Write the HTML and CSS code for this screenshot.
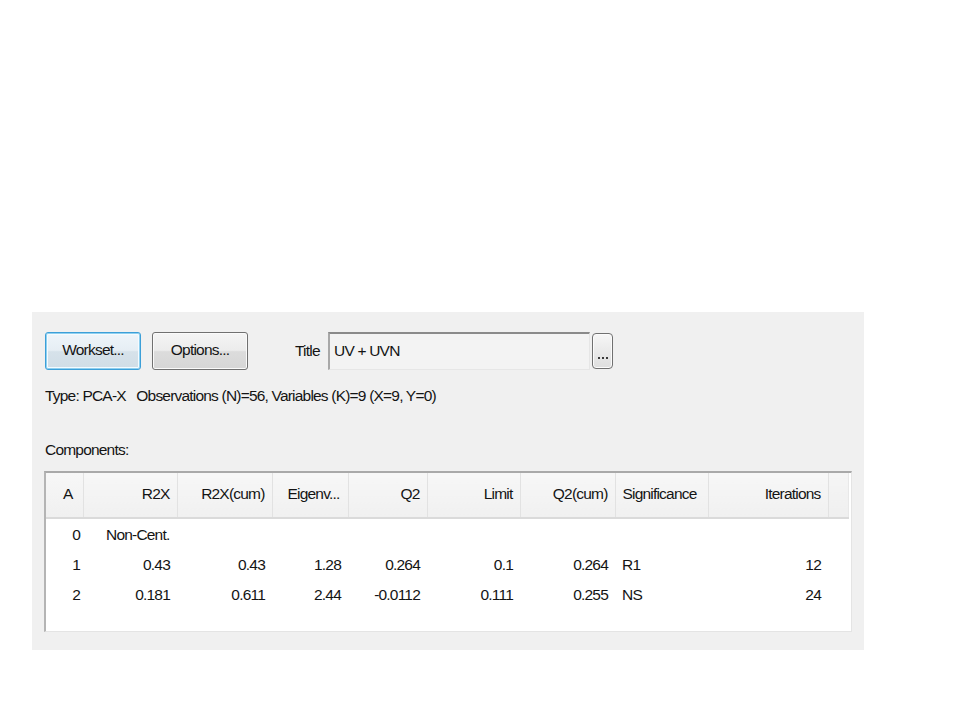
FILE: index.html
```html
<!DOCTYPE html>
<html>
<head>
<meta charset="utf-8">
<link rel="stylesheet" href="styles.css">
</head>
<body>
<div class="panel">
  <div class="toprow">
    <button class="btn btn-focus">Workset...</button>
    <button class="btn">Options...</button>
    <span class="title-label">Title</span>
    <div class="title-field">UV + UVN</div>
    <button class="dots-btn"><span class="dots"><i></i><i></i><i></i></span></button>
  </div>
  <div class="info">Type: PCA-X&nbsp;&nbsp; Observations (N)=56, Variables (K)=9 (X=9, Y=0)</div>
  <div class="label">Components:</div>
  <div class="grid">
    <table>
      <colgroup>
        <col class="c-a"><col class="c-r2x"><col class="c-r2xc"><col class="c-eig"><col class="c-q2"><col class="c-lim"><col class="c-q2c"><col class="c-sig"><col class="c-it"><col>
      </colgroup>
      <thead>
        <tr>
          <th class="r a-head">A</th>
          <th class="r">R2X</th>
          <th class="r">R2X(cum)</th>
          <th class="l eig">Eigenv...</th>
          <th class="r">Q2</th>
          <th class="r">Limit</th>
          <th class="r">Q2(cum)</th>
          <th class="l">Significance</th>
          <th class="r">Iterations</th>
          <th class="filler"></th>
        </tr>
      </thead>
      <tbody>
        <tr class="first">
          <td class="r a-cell">0</td>
          <td class="l noncent" colspan="2">Non-Cent.</td>
          <td></td><td></td><td></td><td></td><td></td><td></td><td></td>
        </tr>
        <tr>
          <td class="r a-cell">1</td>
          <td class="r">0.43</td>
          <td class="r">0.43</td>
          <td class="r">1.28</td>
          <td class="r">0.264</td>
          <td class="r">0.1</td>
          <td class="r">0.264</td>
          <td class="l">R1</td>
          <td class="r">12</td>
          <td></td>
        </tr>
        <tr>
          <td class="r a-cell">2</td>
          <td class="r">0.181</td>
          <td class="r">0.611</td>
          <td class="r">2.44</td>
          <td class="r">-0.0112</td>
          <td class="r">0.111</td>
          <td class="r">0.255</td>
          <td class="l">NS</td>
          <td class="r">24</td>
          <td></td>
        </tr>
      </tbody>
    </table>
  </div>
</div>
</body>
</html>
```
FILE: styles.css
```css
html, body {
  margin: 0;
  padding: 0;
  background: #ffffff;
}
body {
  font-family: "Liberation Sans", Arial, sans-serif;
  font-size: 15.5px;
  letter-spacing: -0.8px;
  color: #141414;
}
.panel {
  box-sizing: border-box;
  margin: 312px 0 0 32px;
  width: 832px;
  height: 338px;
  background: #f0f0f0;
  padding: 20px 0 0 13px;
}
.toprow {
  display: flex;
  align-items: center;
  height: 38px;
}
.btn {
  box-sizing: border-box;
  width: 96px;
  height: 38px;
  margin: 0 11px 0 0;
  padding: 0 0 2px 0;
  font: inherit;
  letter-spacing: -0.8px;
  color: #141414;
  border: 1px solid #707070;
  border-radius: 3px;
  background: linear-gradient(#f4f4f4 0%, #ececec 48%, #dcdcdc 52%, #d6d6d6 100%);
  box-shadow: inset 0 0 0 1px #fafafa;
}
.btn-focus {
  border: 1px solid #3c9fd8;
  box-shadow: inset 0 0 0 1px #8fd0f0, inset 0 0 0 2px #f4fbff;
  background: linear-gradient(#eef5fa 0%, #e6eef4 48%, #d6e2ea 52%, #d0dde6 100%);
}
.title-label {
  margin-left: 36px;
  width: 33px;
}
.title-field {
  box-sizing: border-box;
  width: 262px;
  height: 38px;
  padding: 0 0 2px 4px;
  display: flex;
  align-items: center;
  background: #f3f3f3;
  border-top: 2px solid #8a8a8a;
  border-left: 2px solid #a8a8a8;
  border-right: 1px solid #e6e6e6;
  border-bottom: 1px solid #e6e6e6;
}
.dots-btn {
  box-sizing: border-box;
  width: 21px;
  height: 36px;
  margin-left: 2px;
  padding: 0 0 9px 0;
  border: 1px solid #707070;
  border-radius: 4px;
  background: linear-gradient(#f6f6f6, #dedede);
  box-shadow: inset 0 0 0 1px #fbfbfb;
  display: flex;
  align-items: flex-end;
  justify-content: center;
}
.dots {
  display: flex;
  gap: 2px;
}
.dots i {
  display: block;
  width: 2px;
  height: 2px;
  background: #3a3a3a;
}
.info {
  margin-top: 16px;
  line-height: 20px;
  height: 20px;
}
.label {
  margin-top: 34px;
  line-height: 20px;
  height: 20px;
}
.grid {
  box-sizing: border-box;
  margin: 11px 0 0 -1px;
  width: 808px;
  height: 161px;
  background: #ffffff;
  border-top: 2px solid #a9a9a9;
  border-left: 2px solid #b4b4b4;
  border-right: 1px solid #e4e4e4;
  border-bottom: 1px solid #e4e4e4;
  padding-right: 3px;
}
table {
  border-collapse: collapse;
  table-layout: fixed;
  width: 803px;
}
col.c-a { width: 37px; }
col.c-r2x { width: 94px; }
col.c-r2xc { width: 95px; }
col.c-eig { width: 76px; }
col.c-q2 { width: 79px; }
col.c-lim { width: 93px; }
col.c-q2c { width: 95px; }
col.c-sig { width: 93px; }
col.c-it { width: 120px; }
th {
  font-weight: normal;
  height: 42px;
  padding: 0 7px 2px 7px;
  background: linear-gradient(#f7f7f7, #f0f0f0);
  border-right: 1px solid #e2e2e2;
  border-bottom: 2px solid #dadada;
  white-space: nowrap;
  overflow: hidden;
}
th.eig { padding-left: 15px; padding-right: 0; }
th.filler {
  border-right: 1px solid #e8e8e8;
  background: linear-gradient(#f5f5f5, #efefef);
}
td {
  height: 30px;
  padding: 0 7px;
  white-space: nowrap;
  line-height: 30px;
}
tr.first td {
  height: 30px;
  padding-top: 1px;
}
.r { text-align: right; }
.l { text-align: left; }
th.a-head { padding-right: 10px; }
td.a-cell { padding-right: 3px; }
td.noncent { padding-left: 23px; }
```
